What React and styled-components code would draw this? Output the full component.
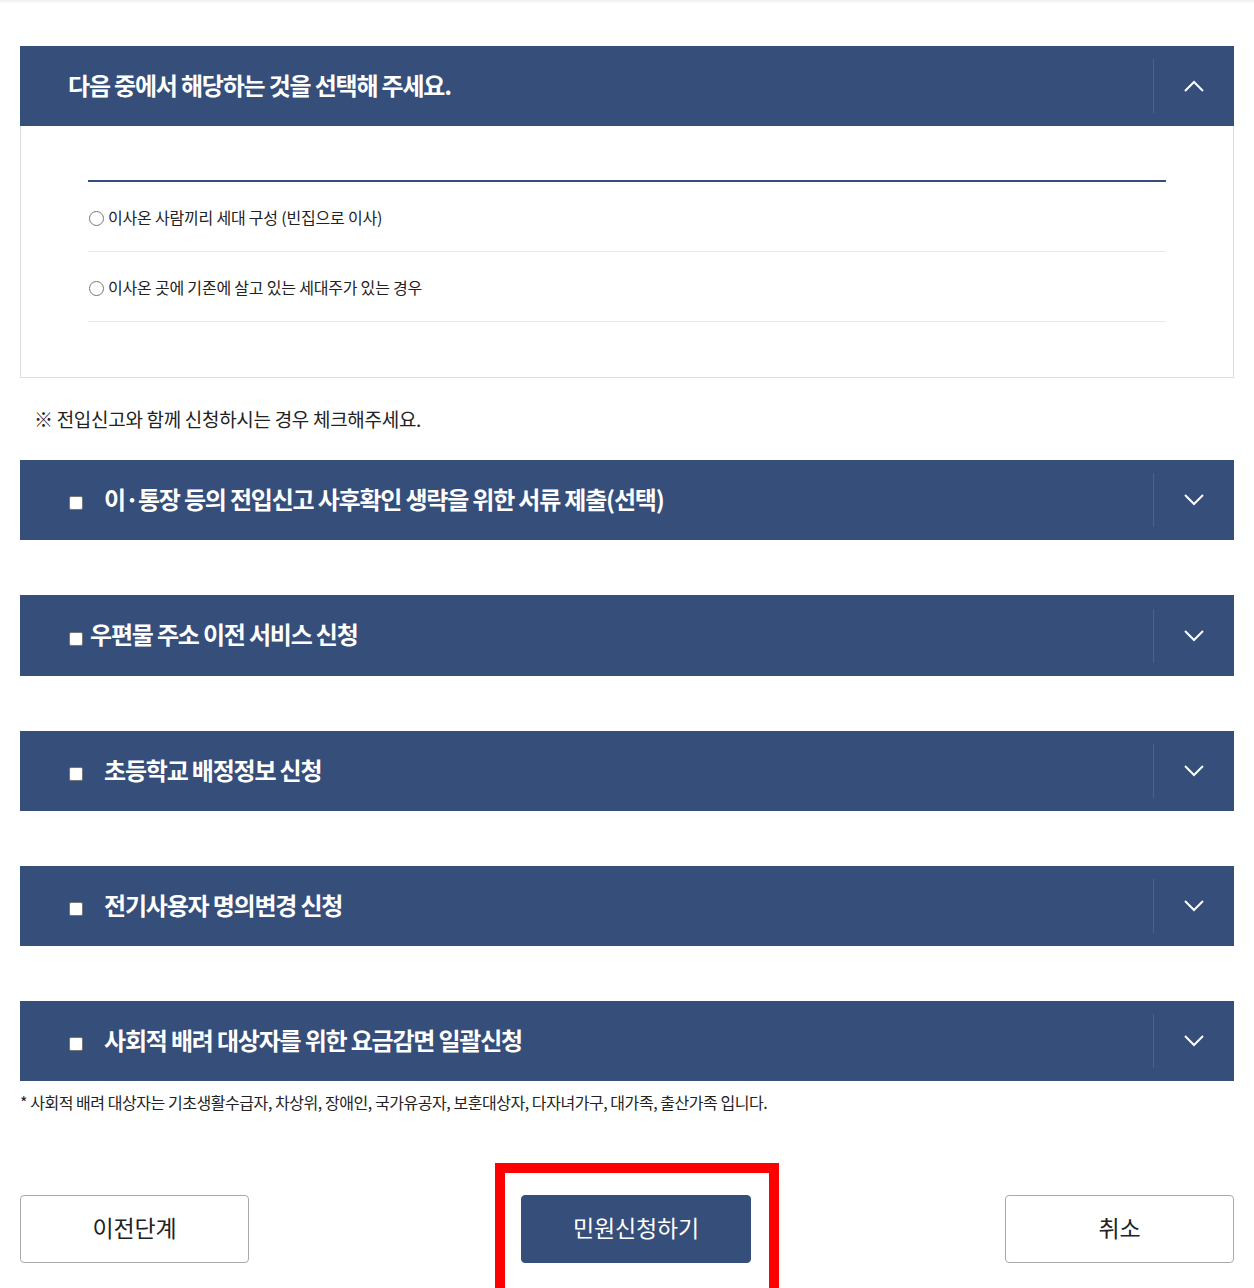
import React from 'react';
import styled, { createGlobalStyle } from 'styled-components';

const NAVY = '#354e7a';

const GlobalStyle = createGlobalStyle`
  html, body {
    margin: 0;
    padding: 0;
    background: #fff;
    overflow: hidden;
  }
  body {
    font-family: "Noto Sans CJK KR", "Noto Sans", sans-serif;
    color: #222;
  }
`;

const Page = styled.div`
  height: 1288px;
  box-sizing: border-box;
  padding: 46px 20px 0;
  background: linear-gradient(#f0f0f0, #fff 4px);
`;

const Panel = styled.section`
  margin-top: ${(p) => p.$top || 0}px;
`;

const Header = styled.div`
  display: flex;
  align-items: center;
  height: ${(p) => p.$h || 80}px;
  background: ${NAVY};
  color: #fff;
`;

const HeaderMain = styled.label`
  flex: 1;
  display: flex;
  align-items: center;
  padding-left: ${(p) => (p.$check ? 49 : 48)}px;
  padding-bottom: 4px;
  font-size: 24px;
  font-weight: 700;
  letter-spacing: -1.2px;
`;

const Check = styled.input.attrs({ type: 'checkbox' })`
  appearance: none;
  box-sizing: border-box;
  width: 14px;
  height: 14px;
  margin: 10px ${(p) => (p.$tight ? 7 : 21)}px 0 0;
  background: #fff;
  border: 1px solid #767676;
  border-radius: 2px;
  flex-shrink: 0;
`;

const Toggle = styled.div`
  width: 80px;
  height: 54px;
  border-left: 1px solid #4a628c;
  display: flex;
  align-items: center;
  justify-content: center;
`;

const Body = styled.div`
  border: 1px solid #dcdcdc;
  border-top: 0;
  padding: 54px 67px 55px;
`;

const List = styled.ul`
  list-style: none;
  margin: 0;
  padding: 0;
  border-top: 2px solid ${NAVY};
`;

const Item = styled.li`
  height: 69px;
  display: flex;
  align-items: center;
  border-bottom: 1px solid #e8e8e8;
  font-size: 16px;
  letter-spacing: -0.2px;
  color: #222;
`;

const Radio = styled.input.attrs({ type: 'radio' })`
  width: 15px;
  height: 15px;
  margin: 3px 4px 0 1px;
`;

const Note = styled.p`
  margin: 27px 0 28px 14px;
  font-size: 19px;
  letter-spacing: -0.3px;
  color: #222;
`;

const Footnote = styled.p`
  margin: 9px 0 0;
  font-size: 16px;
  letter-spacing: -0.45px;
  color: #222;
`;

const Actions = styled.div`
  display: flex;
  align-items: flex-start;
  margin-top: 49px;
`;

const Button = styled.button`
  width: ${(p) => p.$w || 229}px;
  height: 68px;
  padding: 0 0 5px;
  margin-top: ${(p) => p.$mt || 0}px;
  margin-left: ${(p) => p.$ml || '0'};
  border-radius: 4px;
  border: 1px solid ${(p) => (p.$primary ? NAVY : '#aaa')};
  background: ${(p) => (p.$primary ? NAVY : '#fff')};
  color: ${(p) => (p.$primary ? '#fff' : '#222')};
  font-family: inherit;
  font-size: 23px;
  letter-spacing: -0.2px;
  cursor: pointer;
`;

const Highlight = styled.div`
  margin-left: 246px;
  border: 10px solid #ff0000;
  padding: 22px 18px 40px 16px;
`;

const Chevron = ({ up }) => (
  <svg width="20" height="12" viewBox="0 0 20 12" fill="none">
    <path
      d={up ? 'M1 11 L10 2 L19 11' : 'M1 1 L10 10 L19 1'}
      stroke="#fff"
      strokeWidth="2"
    />
  </svg>
);

const services = [
  { title: '이·통장 등의 전입신고 사후확인 생략을 위한 서류 제출(선택)', h: 80 },
  { title: '우편물 주소 이전 서비스 신청', tight: true, h: 81 },
  { title: '초등학교 배정정보 신청', h: 80 },
  { title: '전기사용자 명의변경 신청', h: 80 },
  { title: '사회적 배려 대상자를 위한 요금감면 일괄신청', h: 80 },
];

export default function App() {
  return (
    <>
      <GlobalStyle />
      <Page>
        <Panel>
          <Header>
            <HeaderMain>다음 중에서 해당하는 것을 선택해 주세요.</HeaderMain>
            <Toggle>
              <Chevron up />
            </Toggle>
          </Header>
          <Body>
            <List>
              <Item>
                <Radio name="household" />
                이사온 사람끼리 세대 구성 (빈집으로 이사)
              </Item>
              <Item>
                <Radio name="household" />
                이사온 곳에 기존에 살고 있는 세대주가 있는 경우
              </Item>
            </List>
          </Body>
        </Panel>

        <Note>※ 전입신고와 함께 신청하시는 경우 체크해주세요.</Note>

        {services.map((s, i) => (
          <Panel key={s.title} $top={i === 0 ? 0 : 55}>
            <Header $h={s.h}>
              <HeaderMain $check>
                <Check $tight={s.tight} />
                {s.title}
              </HeaderMain>
              <Toggle>
                <Chevron />
              </Toggle>
            </Header>
          </Panel>
        ))}

        <Footnote>
          * 사회적 배려 대상자는 기초생활수급자, 차상위, 장애인, 국가유공자, 보훈대상자, 다자녀가구, 대가족, 출산가족 입니다.
        </Footnote>

        <Actions>
          <Button $mt={32}>이전단계</Button>
          <Highlight>
            <Button $primary $w={230}>민원신청하기</Button>
          </Highlight>
          <Button $mt={32} $ml="auto">취소</Button>
        </Actions>
      </Page>
    </>
  );
}
